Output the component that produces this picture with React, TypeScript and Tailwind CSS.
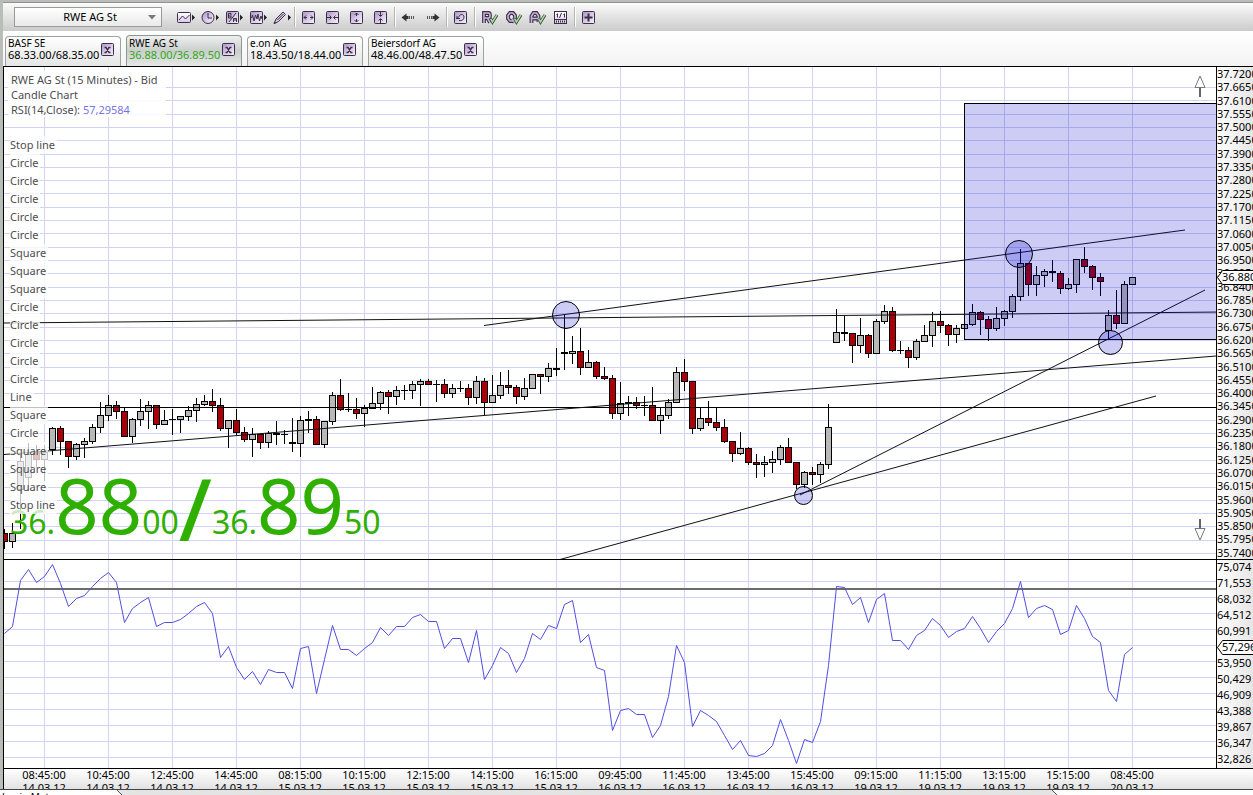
import { useState, type ReactNode } from "react";

/* Candle: [centre x, high, body top, body bottom, low, kind]; u = up, d = down, n = doji */
type Kind = "u" | "d" | "n";
type Candle = [number, number, number, number, number, Kind];

const CANDLES: Candle[] = [
  [4, 529, 533, 541, 548, "d"], [12, 523, 533, 541, 547, "u"], [20, 455, 461, 489, 528, "u"],
  [28, 443, 454, 477, 490, "u"], [36, 445, 451, 459, 466, "d"], [44, 445, 452, 459, 480, "u"],
  [52, 427, 428, 449, 454, "u"], [60, 426, 428, 441, 454, "d"], [68, 441, 441, 456, 467, "d"],
  [76, 443, 444, 456, 459, "u"], [84, 438, 441, 444, 457, "u"], [92, 424, 427, 441, 443, "u"],
  [100, 402, 415, 427, 432, "u"], [108, 395, 405, 415, 420, "u"], [116, 401, 405, 411, 418, "d"],
  [124, 408, 411, 436, 436, "d"], [132, 418, 419, 436, 442, "u"], [140, 399, 411, 419, 425, "u"],
  [148, 401, 405, 411, 428, "u"], [156, 405, 405, 424, 428, "d"], [164, 410, 420, 424, 424, "u"],
  [172, 409, 419, 419, 434, "n"], [180, 416, 416, 419, 432, "u"], [188, 406, 410, 416, 420, "u"],
  [196, 398, 404, 410, 421, "u"], [204, 395, 401, 404, 405, "u"], [212, 389, 401, 405, 411, "d"],
  [220, 398, 405, 428, 430, "d"], [228, 420, 420, 428, 447, "u"], [236, 409, 420, 432, 434, "d"],
  [244, 427, 432, 439, 441, "d"], [252, 428, 434, 439, 456, "u"], [260, 433, 434, 442, 448, "d"],
  [268, 431, 433, 442, 447, "u"], [276, 421, 433, 434, 444, "n"], [284, 430, 434, 434, 443, "n"],
  [292, 418, 442, 443, 451, "n"], [300, 416, 420, 443, 456, "u"], [308, 411, 419, 420, 432, "n"],
  [316, 416, 419, 444, 444, "d"], [324, 421, 421, 444, 447, "u"], [332, 392, 395, 421, 424, "u"],
  [340, 379, 395, 409, 410, "d"], [348, 393, 409, 409, 411, "n"], [356, 398, 409, 413, 418, "d"],
  [364, 405, 408, 413, 426, "u"], [372, 387, 403, 408, 408, "u"], [380, 391, 392, 403, 409, "u"],
  [388, 390, 392, 396, 413, "d"], [396, 386, 390, 396, 404, "u"], [404, 385, 390, 390, 399, "n"],
  [412, 381, 384, 390, 398, "u"], [420, 379, 381, 384, 405, "u"], [428, 379, 381, 384, 384, "d"],
  [436, 380, 384, 384, 401, "n"], [444, 379, 384, 393, 397, "d"], [452, 384, 388, 393, 397, "u"],
  [460, 381, 388, 388, 391, "n"], [468, 384, 388, 397, 404, "d"], [476, 376, 381, 397, 403, "u"],
  [484, 378, 381, 402, 414, "d"], [492, 375, 395, 402, 402, "u"], [500, 372, 385, 395, 398, "u"],
  [508, 370, 385, 387, 393, "d"], [516, 385, 387, 396, 403, "d"], [524, 378, 388, 396, 399, "u"],
  [532, 374, 374, 388, 388, "u"], [540, 374, 374, 376, 393, "d"], [548, 363, 368, 376, 381, "u"],
  [556, 348, 368, 369, 375, "n"], [564, 315, 352, 353, 369, "n"], [572, 336, 351, 353, 363, "u"],
  [580, 328, 351, 367, 374, "d"], [588, 350, 362, 367, 367, "u"], [596, 361, 362, 376, 378, "d"],
  [604, 367, 376, 378, 379, "d"], [612, 375, 378, 413, 418, "d"], [620, 382, 403, 413, 419, "u"],
  [628, 396, 402, 403, 415, "n"], [636, 397, 402, 405, 408, "d"], [644, 396, 405, 405, 415, "n"],
  [652, 387, 405, 420, 420, "d"], [660, 407, 415, 420, 433, "u"], [668, 399, 402, 415, 418, "u"],
  [676, 367, 372, 402, 402, "u"], [684, 359, 372, 381, 390, "d"], [692, 381, 381, 428, 433, "d"],
  [700, 408, 418, 428, 430, "u"], [708, 401, 418, 422, 425, "d"], [716, 408, 422, 427, 430, "d"],
  [724, 419, 427, 441, 442, "d"], [732, 441, 441, 453, 461, "d"], [740, 432, 448, 453, 454, "u"],
  [748, 447, 448, 462, 464, "d"], [756, 454, 462, 464, 477, "d"], [764, 456, 462, 464, 476, "u"],
  [772, 451, 459, 462, 472, "u"], [780, 445, 447, 459, 464, "u"], [788, 438, 447, 462, 462, "d"],
  [796, 462, 462, 484, 488, "d"], [804, 471, 472, 484, 487, "u"], [812, 467, 472, 474, 484, "d"],
  [820, 462, 464, 474, 482, "u"], [828, 404, 427, 464, 468, "u"], [836, 309, 332, 342, 342, "u"],
  [844, 315, 332, 333, 340, "n"], [852, 333, 333, 345, 362, "d"], [860, 318, 335, 345, 352, "u"],
  [868, 334, 335, 353, 357, "d"], [876, 319, 321, 353, 353, "u"], [884, 305, 311, 321, 323, "u"],
  [892, 307, 311, 350, 351, "d"], [900, 341, 350, 350, 353, "n"], [908, 347, 350, 357, 367, "d"],
  [916, 339, 341, 357, 359, "u"], [924, 325, 335, 341, 341, "u"], [932, 312, 321, 335, 346, "u"],
  [940, 311, 321, 325, 332, "d"], [948, 324, 325, 334, 345, "d"], [956, 325, 328, 334, 342, "u"],
  [964, 324, 324, 328, 328, "u"], [972, 304, 312, 324, 325, "u"], [980, 311, 312, 319, 334, "d"],
  [988, 316, 319, 328, 340, "d"], [996, 307, 318, 328, 330, "u"], [1004, 310, 311, 318, 325, "u"],
  [1012, 294, 296, 311, 317, "u"], [1020, 249, 263, 296, 300, "u"], [1028, 263, 263, 284, 295, "d"],
  [1036, 266, 275, 284, 295, "u"], [1044, 269, 271, 275, 286, "u"], [1052, 260, 271, 272, 281, "n"],
  [1060, 271, 273, 288, 293, "d"], [1068, 278, 284, 288, 289, "u"], [1076, 259, 259, 284, 292, "u"],
  [1084, 247, 259, 266, 272, "d"], [1092, 265, 266, 277, 289, "d"], [1100, 273, 277, 281, 295, "d"],
  [1108, 310, 315, 330, 338, "u"], [1116, 290, 315, 323, 328, "d"], [1124, 281, 284, 323, 323, "u"],
  [1132, 277, 277, 284, 284, "u"],
];

/* RSI curve, one value every 8 units from x = 4 */
const RSI = [
  633, 626, 580, 569, 582, 576, 564, 583, 606, 598, 595, 586, 578, 572, 582, 622, 608, 602, 597, 626,
  622, 622, 619, 613, 606, 602, 613, 657, 646, 667, 679, 671, 684, 669, 672, 672, 688, 648, 646, 693,
  659, 625, 649, 649, 655, 648, 642, 627, 635, 626, 626, 617, 614, 621, 621, 648, 638, 638, 662, 630,
  679, 665, 647, 653, 672, 658, 633, 639, 625, 628, 604, 600, 642, 634, 667, 670, 730, 710, 708, 714,
  714, 737, 725, 696, 645, 662, 726, 710, 715, 721, 735, 749, 740, 755, 756, 753, 745, 719, 740, 763,
  739, 742, 721, 665, 586, 587, 604, 597, 622, 599, 593, 640, 640, 649, 635, 630, 618, 625, 637, 631,
  628, 616, 628, 642, 631, 623, 608, 581, 617, 608, 605, 609, 634, 630, 605, 618, 636, 642, 690, 701,
  654, 647,
];

const PRICE_STEPS = Array.from({ length: 37 }, (_, i) => i);
const PRICE_LABELS = PRICE_STEPS.map((i) => (37.72 - i * 0.055).toFixed(4));
const PRICE_LINES = PRICE_STEPS.slice(1).map((i) => Math.floor(74.1 + 13.32 * i));
const RSI_LINES = Array.from({ length: 12 }, (_, i) => 581 + 16 * i);
/* The empty step is the one the current value's tag sits on */
const RSI_LABELS = ["75,074", "71,553", "68,032", "64,512", "60,991", "", "53,950", "50,429", "46,909", "43,388", "39,867", "36,347", "32,826"];
const TIME_LINES = Array.from({ length: 18 }, (_, i) => 44 + 64 * i);
const TIMES: [string, string][] = [
  ["08:45:00", "14.03.12"], ["10:45:00", "14.03.12"], ["12:45:00", "14.03.12"], ["14:45:00", "14.03.12"],
  ["08:15:00", "15.03.12"], ["10:15:00", "15.03.12"], ["12:15:00", "15.03.12"], ["14:15:00", "15.03.12"],
  ["16:15:00", "15.03.12"], ["09:45:00", "16.03.12"], ["11:45:00", "16.03.12"], ["13:45:00", "16.03.12"],
  ["15:45:00", "16.03.12"], ["09:15:00", "19.03.12"], ["11:15:00", "19.03.12"], ["13:15:00", "19.03.12"],
  ["15:15:00", "19.03.12"], ["08:45:00", "20.03.12"],
];
const DRAWINGS = [
  "Stop line", "Circle", "Circle", "Circle", "Circle", "Circle", "Square", "Square", "Square", "Circle", "Circle",
  "Circle", "Circle", "Circle", "Line", "Square", "Circle", "Square", "Square", "Square", "Stop line",
];
const TABS = [
  { name: "BASF SE", quote: "68.33.00/68.35.00" },
  { name: "RWE AG St", quote: "36.88.00/36.89.50" },
  { name: "e.on AG", quote: "18.43.50/18.44.00" },
  { name: "Beiersdorf AG", quote: "48.46.00/48.47.50" },
];

const INK = "#3a2f45";

function Box({ children }: { children?: ReactNode }) {
  return (
    <>
      <rect x="3.5" y="3.5" width="12" height="12" rx="1" fill="url(#lilac)" stroke={INK} />
      {children}
    </>
  );
}
const More = () => <path d="M17 6.5v6l3-3z" fill="#222" />;

function Letter({ d }: { d: string }) {
  return (
    <>
      <path d={d} fill="none" stroke={INK} strokeWidth="3.8" />
      <path d={d} fill="none" stroke="#c9b2dc" strokeWidth="1.6" />
      <path d="M11.5 10.5l2 3.5 4.5-7" fill="none" stroke="#3c5a3c" strokeWidth="3.2" />
      <path d="M11.7 10.8l1.800 3 4.200-6.600" fill="none" stroke="#b5dcae" strokeWidth="1.4" />
    </>
  );
}

const GROUPS: { label: string; icon: ReactNode }[][] = [
  [
    { label: "Chart type", icon: <><rect x="2.5" y="4.5" width="13" height="10" rx="1" fill="url(#pale)" stroke={INK} /><path d="M4 12l3.500-4 3 3 4-4" fill="none" stroke={INK} /><More /></> },
    { label: "Period", icon: <><circle cx="9" cy="9.5" r="6" fill="url(#lilac)" stroke={INK} /><path d="M9 5v5h4" fill="none" stroke={INK} /><More /></> },
    { label: "Bid or ask", icon: <><Box><path d="M5.5 5.500v4.500h2.500v-2h-2M5.500 5.500h2.500v2M6 14l7-9M10.500 14v-3.500h3v3.500M10.500 12h3" fill="none" stroke={INK} /></Box><More /></> },
    { label: "Indicators", icon: <><Box><path d="M4.500 10l1-3 1.500 6 1.500-6 1.500 4 1-5 1.500 7 1.500-5 1 3" fill="none" stroke={INK} /></Box><More /></> },
    { label: "Draw", icon: <><path d="M3 15.500l2-4.500 7-7 2.500 2.500-7 7z" fill="url(#lilac)" stroke={INK} /><path d="M6.500 12l6-6M3 15.500l2.500-1" stroke={INK} /><More /></> },
  ],
  [
    { label: "Stretch horizontally", icon: <Box><path d="M5 9.500h3M11 9.500h3M7 7.500l-2 2 2 2M12 7.500l2 2-2 2" fill="none" stroke={INK} /></Box> },
    { label: "Shrink horizontally", icon: <Box><path d="M4 9.500h4M11 9.500h4M6.500 7.500l2 2-2 2M12.500 7.500l-2 2 2 2" fill="none" stroke={INK} /></Box> },
    { label: "Stretch vertically", icon: <Box><path d="M9.500 5v3M9.500 11v3M7.500 7l2-2 2 2M7.500 12l2 2 2-2" fill="none" stroke={INK} /></Box> },
    { label: "Shrink vertically", icon: <Box><path d="M9.500 4v4M9.500 11v4M7.500 6.500l2 2 2-2M7.500 12.500l2-2 2 2" fill="none" stroke={INK} /></Box> },
  ],
  [
    { label: "Scroll back", icon: <><path d="M2.500 9.500l5-4v2.500h2v3h-2v2.500z" fill="#333" /><path d="M10.500 8v3M12.500 8v3M14.500 8v3" stroke="#555" /></> },
    { label: "Scroll forward", icon: <><path d="M16.500 9.500l-5-4v2.500h-2v3h2v2.500z" fill="#333" /><path d="M8.500 8v3M6.500 8v3M4.500 8v3" stroke="#555" /></> },
  ],
  [{ label: "Reset", icon: <Box><path d="M5 10.500h4M6 8v2.500l2-2c1-3 5-2.500 5 .5s-2.500 4-5 3.500" fill="none" stroke={INK} /></Box> }],
  [
    { label: "Confirm R", icon: <Letter d="M5 15V5h4.500q1.500 0 1.500 2.500T9.500 10H5M8.500 10l2.500 4.500" /> },
    { label: "Confirm Q", icon: <Letter d="M5 7.500L7 5h3l2 2.500v3l-2 2.500H7l-2-2.500zM9 11l2.500 3.500" /> },
    { label: "Confirm A", icon: <Letter d="M4.500 15V8l2-3h3l2 3v6M4.500 10.500h7" /> },
    { label: "Scale", icon: <><rect x="3.500" y="3.500" width="12" height="12" fill="url(#pale)" stroke={INK} /><path d="M6.500 5.500v4M5.500 6.500h1M10.500 5l-2 5M13.500 5.500v4M12.500 6.500h1M4 11.500h11" fill="none" stroke={INK} /><path d="M5 13.500h10" stroke={INK} strokeWidth="2" strokeDasharray="1 1" /></> },
  ],
  [{ label: "Add", icon: <Box><path d="M9.500 5.500v8M5.500 9.500h8" stroke={INK} strokeWidth="2" /></Box> }],
];

function Toolbar() {
  return (
    <div className="flex h-[29px] shrink-0 items-center border-t border-[#8f9390] bg-linear-to-b from-[#fbfbfb] to-[#cbcbcb] pl-[11px]">
      <div className="relative">
        <select
          aria-label="Instrument"
          defaultValue="RWE AG St"
          className="block h-5 w-[148px] appearance-none border border-[#999] bg-linear-to-b from-white to-[#e9e9e9] pr-4 pl-5 text-center text-[11px] leading-4 text-black [text-align-last:center]"
        >
          {TABS.map((t) => <option key={t.name}>{t.name}</option>)}
        </select>
        <svg className="pointer-events-none absolute top-2 right-1.5" width="8" height="5" aria-hidden="true"><path d="M0 0h8l-4 4.500z" fill="#777" /></svg>
      </div>
      <div className="ml-[11px] flex items-center">
        {GROUPS.map((group, g) => (
          <div key={g} className="flex items-center">
            {g > 0 && <span className="mr-0.5 ml-px h-5 w-px bg-[#b4b4b4] shadow-[1px_0_0_#fff]" />}
            {group.map((b) => (
              <button key={b.label} type="button" aria-label={b.label} className="flex w-6 justify-center">
                <svg width="21" height="19" viewBox="0 0 21 19" aria-hidden="true" className="shrink-0">{b.icon}</svg>
              </button>
            ))}
          </div>
        ))}
      </div>
    </div>
  );
}

function Tabs() {
  const [active, setActive] = useState(1);
  return (
    <div className="flex h-[35px] shrink-0 items-end gap-[5px] bg-linear-to-b from-white to-[#f3f3f3] pl-0.5">
      {TABS.map((t, i) => (
        <div
          key={t.name}
          className={
            i === active
              ? "flex w-[116px] items-center justify-between rounded-t border border-b-0 border-[#8d9794] bg-linear-to-b from-[#eef0ef] via-[#c9cecb] to-[#e6e8e7] pt-px pr-1.5 pb-[5px] pl-0.5"
              : "flex w-[116px] items-center justify-between rounded-t border border-b-0 border-[#9aa3a0] bg-linear-to-b from-white via-[#f1f2f1] to-[#e4e6e5] pr-1.5 pb-[5px] pl-0.5"
          }
        >
          <button type="button" onClick={() => setActive(i)} className="text-left whitespace-nowrap">
            <span className="block text-[10px] leading-3 text-black">{t.name}</span>
            <span className={i === active ? "block text-[11px] leading-3 text-[#35a818]" : "block text-[11px] leading-3 text-black"}>{t.quote}</span>
          </button>
          <button type="button" aria-label={`Close ${t.name}`}>
            <svg width="13" height="13" aria-hidden="true">
              <rect x="0.500" y="0.500" width="12" height="12" rx="1" fill="url(#lilac)" stroke={INK} />
              <path d="M3.500 4.500H5L8 9.500h1.500M9.500 4.500H8L5 9.500H3.500" fill="none" stroke={INK} strokeWidth="1.400" />
            </svg>
          </button>
        </div>
      ))}
    </div>
  );
}

function Grid({ lines }: { lines: number[] }) {
  return (
    <g shapeRendering="crispEdges" fill="#d2d2f5">
      {lines.map((y) => <rect key={y} x="0" y={y} width="110%" height="1" />)}
      {TIME_LINES.map((x) => <rect key={x} x={x} y="0" width="1" height="1000%" />)}
    </g>
  );
}

function PriceChart() {
  return (
    <svg className="absolute inset-0 h-full w-full" role="img" aria-label="RWE AG St candle chart">
      <g transform="translate(-4 -67)">
        <Grid lines={PRICE_LINES} />
        <g shapeRendering="crispEdges">
          {CANDLES.map(([x, hi, top, bottom, lo, kind]) => (
            <g key={x}>
              <rect x={x} y={hi} width="1" height={lo - hi + 1} fill="#000" />
              <rect x={x - 3} y={top} width="7" height={bottom - top + 1} fill="#000" />
              {kind !== "n" && (
                <rect x={x - 2} y={top + 1} width="5" height={Math.max(bottom - top - 1, 0)} fill={kind === "u" ? "#b9b9b9" : "#a80008"} />
              )}
            </g>
          ))}
          <rect x="0" y="407" width="110%" height="1" fill="#000" />
        </g>
        <g stroke="#111" fill="none">
          <path d="M4 323L2000 305" />
          <path d="M4 454.500L1216 356L2000 292" />
          <path d="M484 325.500L1185 230" />
          <path d="M560 559.500L1156 396" />
          <path d="M800 495L1205 290" />
        </g>
        <g fill="#0000cc" fillOpacity="0.2" stroke="#000">
          <rect x="964.500" y="103.500" width="100%" height="236" />
          <circle cx="566" cy="315" r="13.500" />
          <circle cx="1019" cy="254" r="13.500" />
          <circle cx="1110.500" cy="342.500" r="12" />
          <circle cx="803.500" cy="495.500" r="9" />
        </g>
      </g>
    </svg>
  );
}

function BigQuote() {
  return (
    <div className="absolute bottom-4 left-1.5 flex items-baseline text-[32px] leading-none whitespace-nowrap text-[#2fb000]">
      <span>36.</span>
      <span className="text-[76px] leading-none">88</span>
      <span>00</span>
      <span className="self-end text-[86px] leading-[70px] font-medium">/</span>
      <span>36.</span>
      <span className="text-[76px] leading-none">89</span>
      <span>50</span>
    </div>
  );
}

function Legend() {
  return (
    <div className="absolute top-1 left-1 text-[11px] text-[#4d4d4d]">
      <div className="w-fit bg-white/85 pt-px pr-2 pl-[3px] leading-[15px] whitespace-nowrap">
        <p>RWE AG St (15 Minutes) - Bid</p>
        <p>Candle Chart</p>
        <p>RSI(14,Close): <span className="text-[#7575e0]">57,29584</span></p>
      </div>
      <ul className="mt-[19px] pl-0.5 leading-[18px]">
        {DRAWINGS.map((d, i) => (
          <li key={i} className="w-fit bg-white/75 pr-0.5">{d}</li>
        ))}
      </ul>
    </div>
  );
}

function Tag({ children }: { children: ReactNode }) {
  return (
    <div className="relative h-[15px] pl-[5px] text-[11px] leading-[14px]">
      <svg className="absolute inset-0 h-full w-full overflow-visible" aria-hidden="true">
        <path d="M0.500 7.500L5.500 0.500H60V14.500H5.500z" fill="#fff" stroke="#000" />
      </svg>
      <span className="relative">{children}</span>
    </div>
  );
}

function Workspace() {
  return (
    <div className="grid min-h-0 flex-1 grid-cols-[minmax(0,1fr)_37px] grid-rows-[minmax(0,1fr)_209px_20px] border-t border-l border-black bg-white">
      <section className="relative overflow-hidden border-b border-black">
        <PriceChart />
        <BigQuote />
        <Legend />
        <button type="button" aria-label="Scroll up" className="absolute top-2 right-2.5">
          <svg width="12" height="23" aria-hidden="true"><path d="M6 1L11 12.500H1z" fill="#fff" stroke="#777" /><path d="M6 13v9" stroke="#333" strokeWidth="1.500" /></svg>
        </button>
        <button type="button" aria-label="Scroll down" className="absolute right-2.5 bottom-4.5">
          <svg width="12" height="23" aria-hidden="true"><path d="M6 22L11 10.500H1z" fill="#fff" stroke="#777" /><path d="M6 10V1" stroke="#333" strokeWidth="1.500" /></svg>
        </button>
      </section>

      <div className="relative flex flex-col justify-between overflow-hidden border-b border-l border-black bg-linear-to-r from-white to-[#e6e6e6] text-[11px] leading-[13px]">
        {PRICE_LABELS.map((p) => <span key={p}>{p}</span>)}
        <div className="absolute top-[203px] left-0 w-full"><Tag>36.8800</Tag></div>
      </div>

      <section className="relative overflow-hidden border-b border-black">
        <svg className="absolute inset-0 h-full w-full" role="img" aria-label="RSI chart">
          <g transform="translate(-4 -560)">
            <Grid lines={RSI_LINES} />
            <rect x="0" y="588" width="110%" height="2" fill="#6c6c6c" shapeRendering="crispEdges" />
            <polyline points={RSI.map((y, i) => `${4.5 + 8 * i},${y + 0.5}`).join(" ")} fill="none" stroke="#5050e0" />
          </g>
        </svg>
      </section>

      <div className="relative flex flex-col gap-0.5 overflow-hidden border-b border-l border-black bg-linear-to-r from-white to-[#e6e6e6] text-[11px] leading-[14px]">
        {RSI_LABELS.map((p, i) => <span key={i} className="min-h-3.5">{p}</span>)}
        <div className="absolute top-20 left-0 w-full"><Tag>57,296</Tag></div>
      </div>

      <div className="col-span-2 flex overflow-hidden bg-linear-to-b from-white to-[#e2e2e2] pl-2 text-center text-[11px] leading-3">
        {TIMES.map(([time, date]) => (
          <div key={time + date} className="flex w-16 shrink-0 flex-col gap-px">
            <p>{time}</p>
            <p>{date}</p>
          </div>
        ))}
      </div>
    </div>
  );
}

export default function App() {
  return (
    <div className="flex h-screen flex-col overflow-hidden bg-[#b9bdba] font-['Noto_Sans','Open_Sans',sans-serif] text-black">
      <svg width="0" height="0" className="absolute" aria-hidden="true">
        <defs>
          <linearGradient id="lilac" x1="0" y1="0" x2="1" y2="1"><stop offset="0" stopColor="#a98fc4" /><stop offset="0.550" stopColor="#dccdea" /><stop offset="1" stopColor="#f6f0fa" /></linearGradient>
          <linearGradient id="pale" x1="0" y1="0" x2="0" y2="1"><stop offset="0" stopColor="#fff" /><stop offset="1" stopColor="#d9c6e8" /></linearGradient>
        </defs>
      </svg>
      <div className="flex min-h-0 flex-1 flex-col pt-0.5 pl-[3px]">
        <Toolbar />
        <Tabs />
        <Workspace />
      </div>
      <div className="relative h-1.5 shrink-0 overflow-hidden border-t border-[#444] bg-[#e3e4e3] text-[10px] leading-[14px]">
        <svg className="absolute inset-0 h-full w-full" aria-hidden="true">
          <path d="M0 0H117L123 6H0z" fill="#fff" /><path d="M117 0l6 6" stroke="#555" />
          <path d="M1052 0H4000V6H1058z" fill="#fff" /><path d="M1052 0l6 6" stroke="#555" />
        </svg>
        <span className="relative pl-0.5">Login Met.</span>
      </div>
    </div>
  );
}
